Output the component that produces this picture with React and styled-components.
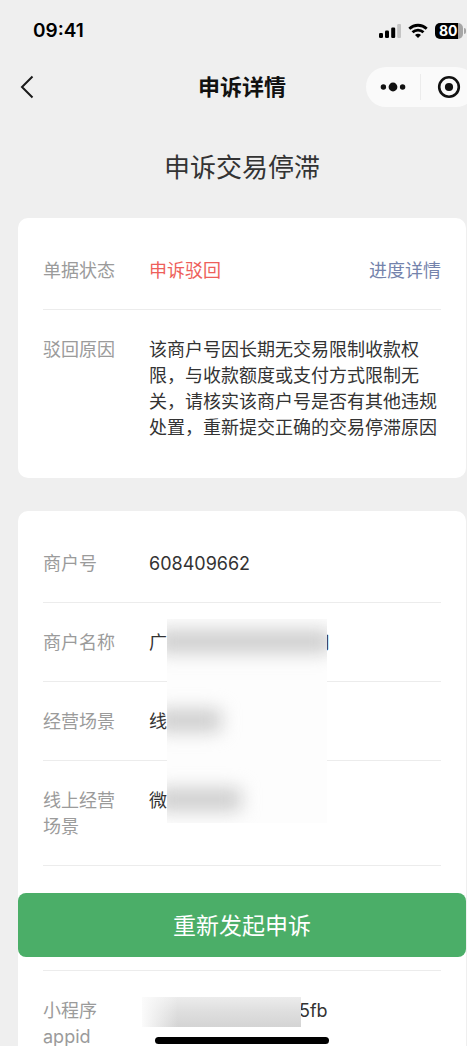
import React from 'react';
import styled, { createGlobalStyle } from 'styled-components';

const GlobalStyle = createGlobalStyle`
  * {
    box-sizing: border-box;
  }
  body {
    margin: 0;
    background: #efefef;
    color: #333333;
    font-family: Inter, "Noto Sans CJK SC", sans-serif;
    font-size: 18px;
    line-height: 26px;
  }
  button {
    padding: 0;
    border: none;
    background: transparent;
    color: inherit;
    font: inherit;
    cursor: pointer;
  }
`;

const Screen = styled.div`
  position: relative;
  display: flex;
  flex-direction: column;
  height: 100vh;
  overflow: hidden;
`;

const StatusBar = styled.div`
  display: flex;
  align-items: center;
  justify-content: space-between;
  flex: none;
  height: 62px;
  padding-left: 33px;
  color: #000000;
`;

const Clock = styled.span`
  font-size: 19px;
  font-weight: 600;
`;

const StatusIcons = styled.div`
  display: flex;
  align-items: center;
  gap: 7px;
`;

const BatteryBody = styled.span`
  position: relative;
  width: 28px;
  height: 16px;
  margin-right: 4px;
  padding-left: 4px;
  border-radius: 5px;
  background: linear-gradient(to right, #000000 23px, #a6a6a6 23px);
  color: #ffffff;
  font-size: 14px;
  font-weight: 700;
  line-height: 16px;
  &::after {
    content: '';
    position: absolute;
    top: 5px;
    right: -3px;
    width: 2px;
    height: 6px;
    border-radius: 0 2px 2px 0;
    background: #a6a6a6;
  }
`;

const NavBar = styled.header`
  display: grid;
  grid-template-columns: 1fr auto 1fr;
  align-items: center;
  flex: none;
  height: 50px;
  padding: 0 1px 0 18px;
`;

const BackButton = styled.button`
  display: flex;
  justify-self: start;
`;

const NavTitle = styled.h1`
  margin: 0;
  color: #111111;
  font-size: 22px;
  font-weight: 700;
`;

const Capsule = styled.div`
  display: grid;
  grid-template-columns: 54px 1px 55px;
  align-items: center;
  justify-self: end;
  height: 40px;
  margin-right: -10px;
  border-radius: 20px;
  background: #fafafa;
`;

const CapsuleButton = styled.button`
  display: flex;
  align-items: center;
  justify-content: center;
  height: 40px;
`;

const CapsuleDivider = styled.span`
  height: 26px;
  background: #ececec;
`;

const Content = styled.main`
  flex: 1;
  min-height: 0;
  padding: 0 1px 0 18px;
  overflow-y: auto;
  scrollbar-width: none;
`;

const PageTitle = styled.h2`
  margin: 0;
  padding: 39px 0 33px;
  font-size: 26px;
  font-weight: 400;
  line-height: 34px;
  text-align: center;
`;

const Card = styled.section`
  position: relative;
  margin-bottom: 33px;
  padding: 13px 25px 12px;
  border-radius: 10px;
  background: #ffffff;
`;

const List = styled.dl`
  margin: 0;
`;

const Row = styled.div`
  display: flex;
  gap: 18px;
  min-height: ${props => props.$tall ? '105px' : '79px'};
  padding: 27px 0 25px;
  border-bottom: 1px solid #ececec;
  &:last-child {
    min-height: 0;
    border-bottom: none;
  }
`;

const Label = styled.dt`
  flex: none;
  width: 88px;
  color: #9b9b9b;
`;

const Value = styled.dd`
  display: flex;
  justify-content: space-between;
  flex: 1;
  min-width: 0;
  margin: 0;
  color: ${props => props.$danger ? '#ee5f5b' : 'inherit'};
`;

const DetailLink = styled.a`
  color: #7483ac;
  text-decoration: none;
`;

const HiddenText = styled.span`
  display: inline-block;
  width: ${props => props.$width};
`;

const Mask = styled.div`
  position: absolute;
  top: 108px;
  left: 149px;
  display: flex;
  flex-direction: column;
  gap: 40px;
  width: 160px;
  height: 204px;
  padding-top: 3px;
  overflow: hidden;
  background: #fdfdfd;
`;

const Smudge = styled.span`
  flex: none;
  width: ${props => props.$width};
  height: 39px;
  margin-left: -10px;
  padding: 8px 0;
  filter: blur(9px);
  &::before {
    content: '';
    display: block;
    height: 23px;
    background: #cdcdcd;
  }
`;

const IdMask = styled.div`
  position: absolute;
  top: 486px;
  left: 124px;
  width: 159px;
  height: 30px;
  background:
    linear-gradient(to right, #fbfbfb, rgba(251, 251, 251, 0) 36px),
    linear-gradient(to bottom, #ececec, #dedede 50%, #d4d4d4);
`;

const SubmitButton = styled.button`
  position: absolute;
  right: 1px;
  bottom: 89px;
  left: 18px;
  height: 64px;
  padding-top: 2px;
  border-radius: 8px;
  background: #4bae68;
  color: #ffffff;
  font-size: 23px;
`;

const HomeBar = styled.div`
  position: absolute;
  right: 1px;
  bottom: 2px;
  left: 18px;
  pointer-events: none;
  &::before {
    content: '';
    display: block;
    width: 174px;
    height: 7px;
    margin: 0 auto;
    border-radius: 4px;
    background: #000000;
  }
`;

const SignalIcon = () => (
  <svg width="22" height="16" viewBox="0 0 22 16" aria-hidden="true">
    <rect x="0" y="10" width="4" height="5" rx="1.2" />
    <rect x="6" y="7.5" width="4" height="7.5" rx="1.2" />
    <rect x="12.2" y="4.5" width="4" height="10.5" rx="1.2" />
    <rect x="18.2" y="1" width="4" height="14" rx="1.2" fill="#c4c4c4" />
  </svg>
)

const WifiIcon = () => (
  <svg width="20" height="16" viewBox="0 0 20 16" fill="none" stroke="#000000" strokeWidth="2.8" aria-hidden="true">
    <path d="M1.3 5.7C6.2 1.1 13.8 1.1 18.7 5.7" />
    <path d="M4.5 9.3C7.6 6.4 12.4 6.4 15.5 9.3" />
    <path d="M10 14.9L7 11.9C8.7 10.4 11.3 10.4 13 11.9Z" fill="#000000" stroke="none" />
  </svg>
)

const BackIcon = () => (
  <svg width="18" height="26" viewBox="0 0 18 26" fill="none" stroke="#1a1a1a" strokeWidth="2" aria-hidden="true">
    <path d="M14.5 2.5L4 13L14.5 23.5" />
  </svg>
)

const MoreIcon = () => (
  <svg width="26" height="12" viewBox="0 0 26 12" fill="#111111" aria-hidden="true">
    <circle cx="3.4" cy="6" r="2.7" />
    <circle cx="13" cy="6" r="4.4" />
    <circle cx="22.6" cy="6" r="2.7" />
  </svg>
)

const CloseIcon = () => (
  <svg width="24" height="24" viewBox="0 0 24 24" fill="none" aria-hidden="true">
    <circle cx="12" cy="12" r="9.8" stroke="#111111" strokeWidth="2.6" />
    <circle cx="12" cy="12" r="4.1" fill="#111111" />
  </svg>
)

const Field = ({label, tall, danger, children}) => {
  return (
    <Row $tall={tall}>
      <Label>{label}</Label>
      <Value $danger={danger}>{children}</Value>
    </Row>
  )
}

const StatusCard = () => {
  return (
    <Card>
      <List>
        <Field label="单据状态" danger>
          申诉驳回
          <DetailLink href="#progress">进度详情</DetailLink>
        </Field>
        <Field label="驳回原因">
          该商户号因长期无交易限制收款权限，与收款额度或支付方式限制无关，请核实该商户号是否有其他违规处置，重新提交正确的交易停滞原因
        </Field>
      </List>
    </Card>
  )
}

const MerchantCard = () => {
  return (
    <Card>
      <List>
        <Field label="商户号">608409662</Field>
        <Field label="商户名称">
          <span>广<HiddenText $width="145px" />司</span>
        </Field>
        <Field label="经营场景">线</Field>
        <Field label="线上经营场景">微</Field>
        <Field tall />
        <Field label="小程序appid">
          <span><HiddenText $width="150px" />5fb</span>
        </Field>
      </List>
      <Mask>
        <Smudge $width="174px" />
        <Smudge $width="64px" />
        <Smudge $width="84px" />
      </Mask>
      <IdMask />
    </Card>
  )
}

const App = () => {
  return (
    <>
    <GlobalStyle />
    <Screen>
      <StatusBar>
        <Clock>09:41</Clock>
        <StatusIcons>
          <SignalIcon />
          <WifiIcon />
          <BatteryBody>80</BatteryBody>
        </StatusIcons>
      </StatusBar>
      <NavBar>
        <BackButton type="button" aria-label="返回"><BackIcon /></BackButton>
        <NavTitle>申诉详情</NavTitle>
        <Capsule>
          <CapsuleButton type="button" aria-label="更多"><MoreIcon /></CapsuleButton>
          <CapsuleDivider />
          <CapsuleButton type="button" aria-label="关闭"><CloseIcon /></CapsuleButton>
        </Capsule>
      </NavBar>
      <Content>
        <PageTitle>申诉交易停滞</PageTitle>
        <StatusCard />
        <MerchantCard />
      </Content>
      <SubmitButton type="button">重新发起申诉</SubmitButton>
      <HomeBar />
    </Screen>
    </>
  );
}

export default App;
